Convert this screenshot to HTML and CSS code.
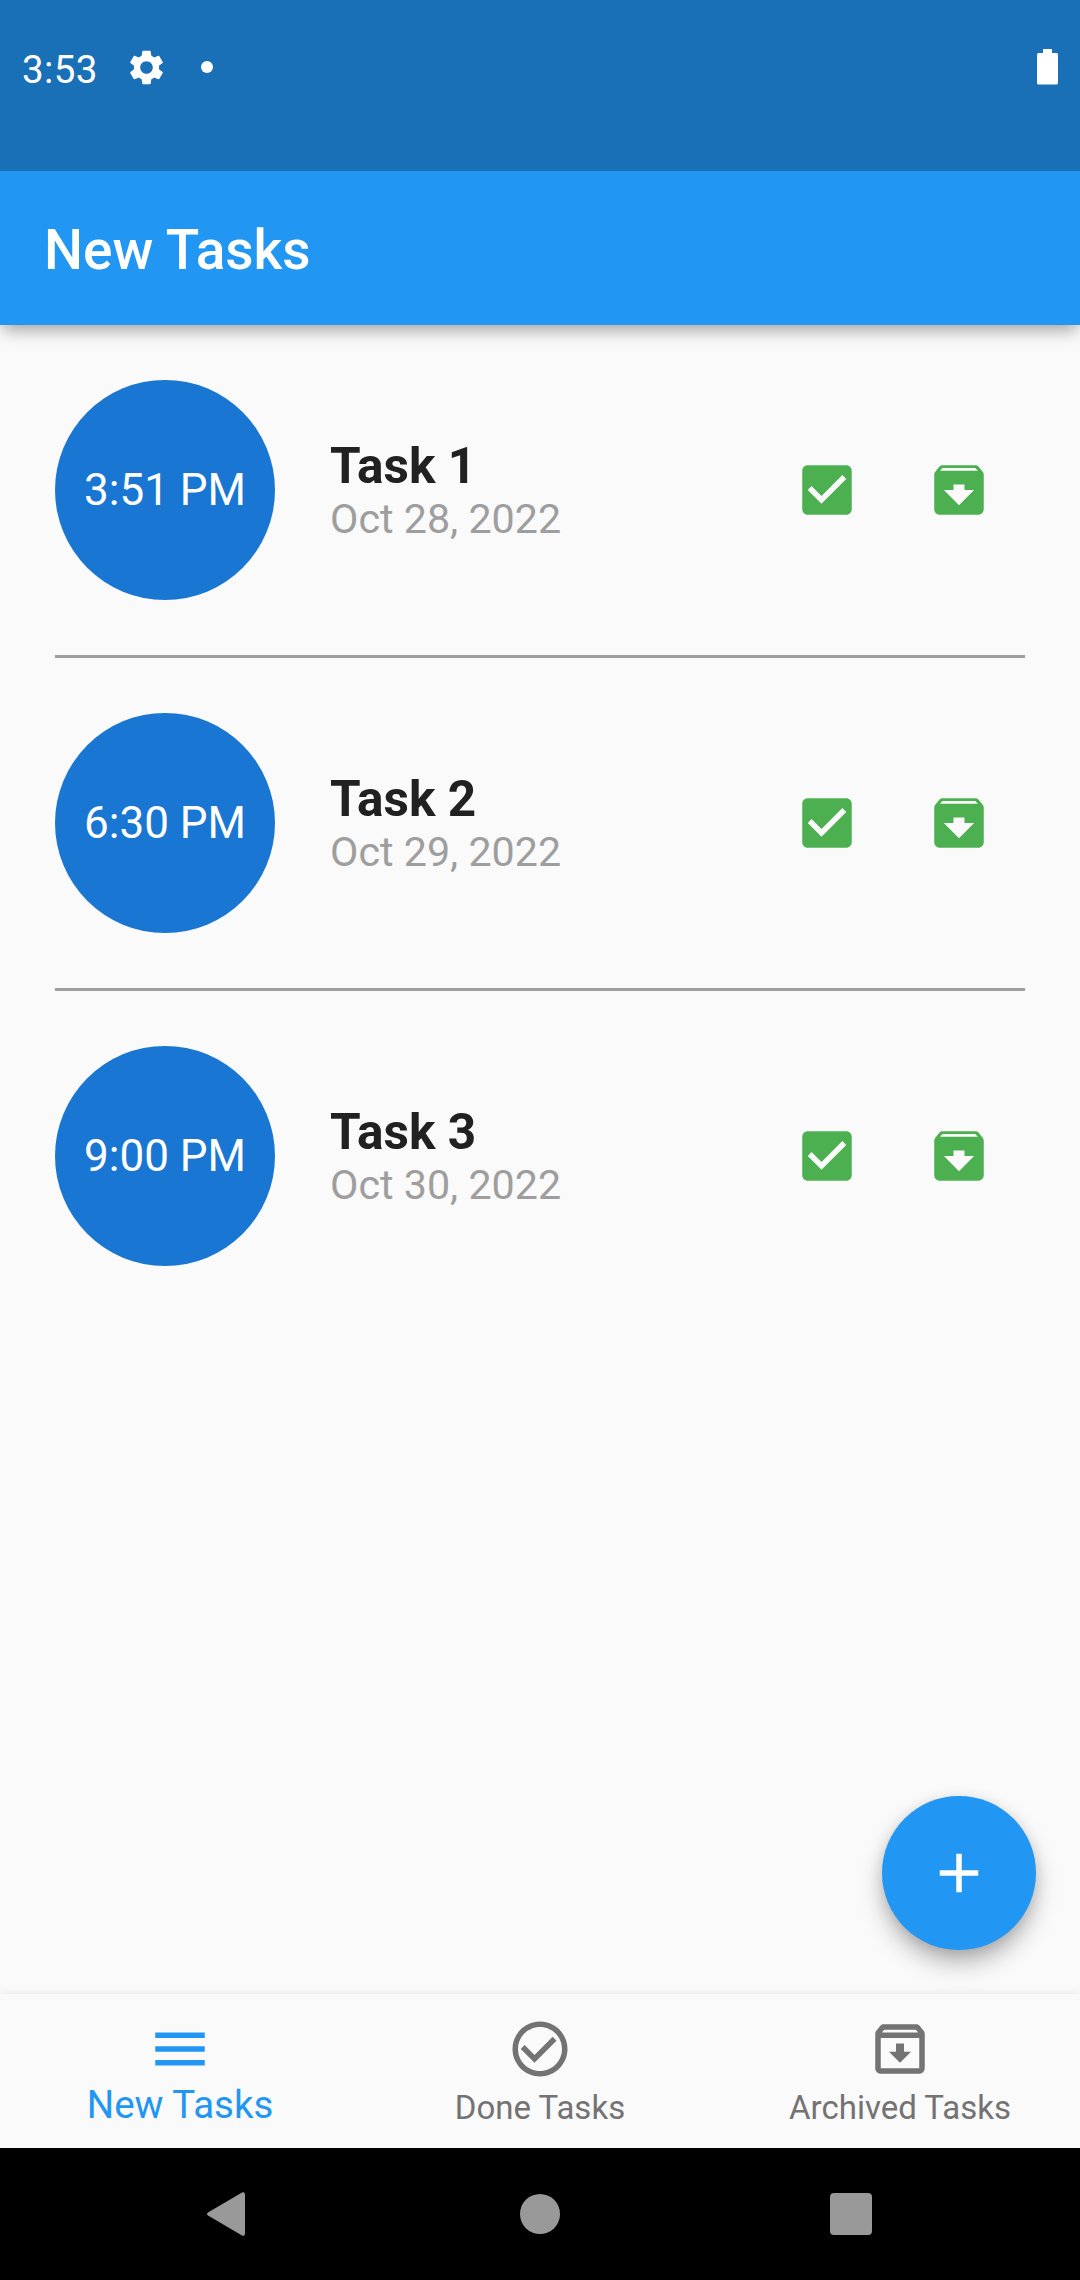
FILE: index.html
```html
<!DOCTYPE html>
<html lang="en">
<head>
<meta charset="utf-8">
<title>New Tasks</title>
<link rel="stylesheet" href="styles.css">
</head>
<body>
<svg class="defs" aria-hidden="true">
  <symbol id="check-box" viewBox="0 0 24 24"><path d="M19 3H5c-1.11 0-2 .9-2 2v14c0 1.1.89 2 2 2h14c1.11 0 2-.9 2-2V5c0-1.1-.89-2-2-2zm-9 14l-5-5 1.41-1.41L10 14.17l7.59-7.59L19 8l-9 9z"/></symbol>
  <symbol id="archive" viewBox="0 0 24 24"><path d="M20.54 5.23l-1.39-1.68C18.88 3.21 18.47 3 18 3H6c-.47 0-.88.21-1.16.55L3.46 5.23C3.17 5.57 3 6.02 3 6.5V19c0 1.1.9 2 2 2h14c1.1 0 2-.9 2-2V6.5c0-.48-.17-.93-.46-1.27zM12 17.5L6.5 12H10v-2h4v2h3.5L12 17.5zM5.12 5l.81-1h12l.94 1H5.12z"/></symbol>
</svg>
<div class="screen">
  <div class="status-bar">
    <span class="clock">3:53</span>
    <svg class="gear" viewBox="2 2 20 20"><path d="M19.14 12.94c.04-.3.06-.61.06-.94 0-.32-.02-.64-.07-.94l2.03-1.58c.18-.14.23-.41.12-.61l-1.92-3.32c-.12-.22-.37-.29-.59-.22l-2.39.96c-.5-.38-1.03-.7-1.62-.94l-.36-2.54c-.04-.24-.24-.41-.48-.41h-3.84c-.24 0-.43.17-.47.41l-.36 2.54c-.59.24-1.13.57-1.62.94l-2.39-.96c-.22-.08-.47 0-.59.22L2.74 8.87c-.12.21-.08.47.12.61l2.03 1.58c-.05.3-.09.63-.09.94s.02.64.07.94l-2.03 1.58c-.18.14-.23.41-.12.61l1.92 3.32c.12.22.37.29.59.22l2.39-.96c.5.38 1.03.7 1.62.94l.36 2.54c.05.24.24.41.48.41h3.84c.24 0 .44-.17.47-.41l.36-2.54c.59-.24 1.13-.56 1.62-.94l2.39.96c.22.08.47 0 .59-.22l1.92-3.32c.12-.22.07-.47-.12-.61l-2.01-1.58zM12 15.6c-1.98 0-3.6-1.62-3.6-3.6s1.62-3.6 3.6-3.6 3.6 1.62 3.6 3.6-1.62 3.6-3.6 3.6z"/></svg>
    <span class="dot"></span>
    <svg class="battery" viewBox="0 0 21 36"><path d="M6 0h9v4h4.500q1.500 0 1.500 1.500v28.500q0 1.500-1.500 1.500h-18q-1.500 0-1.500-1.500v-28.500q0-1.500 1.500-1.500h4.500z"/></svg>
  </div>
  <header class="app-bar"><h1>New Tasks</h1></header>
  <main class="tasks">
    <article class="task">
      <div class="time">3:51 PM</div>
      <div class="info"><h2>Task 1</h2><p>Oct 28, 2022</p></div>
      <button class="action" aria-label="Done"><svg class="icon"><use href="#check-box"/></svg></button>
      <button class="action" aria-label="Archive"><svg class="icon"><use href="#archive"/></svg></button>
    </article>
    <div class="divider"></div>
    <article class="task">
      <div class="time">6:30 PM</div>
      <div class="info"><h2>Task 2</h2><p>Oct 29, 2022</p></div>
      <button class="action" aria-label="Done"><svg class="icon"><use href="#check-box"/></svg></button>
      <button class="action" aria-label="Archive"><svg class="icon"><use href="#archive"/></svg></button>
    </article>
    <div class="divider"></div>
    <article class="task">
      <div class="time">9:00 PM</div>
      <div class="info"><h2>Task 3</h2><p>Oct 30, 2022</p></div>
      <button class="action" aria-label="Done"><svg class="icon"><use href="#check-box"/></svg></button>
      <button class="action" aria-label="Archive"><svg class="icon"><use href="#archive"/></svg></button>
    </article>
    <button class="fab" aria-label="Add task"><svg class="icon" viewBox="0 0 24 24"><path d="M19 13h-6v6h-2v-6H5v-2h6V5h2v6h6v2z"/></svg></button>
  </main>
  <nav class="tabs">
    <a class="tab selected">
      <svg class="icon" viewBox="0 0 24 24"><path d="M3 18h18v-2H3v2zm0-5h18v-2H3v2zm0-7v2h18V6H3z"/></svg>
      <span>New Tasks</span>
    </a>
    <a class="tab">
      <svg class="icon" viewBox="0 0 24 24"><path d="M16.59 7.580L10 14.170l-3.590-3.580L5 12l5 5 8-8zM12 2C6.480 2 2 6.480 2 12s4.480 10 10 10 10-4.480 10-10S17.520 2 12 2zm0 18c-4.420 0-8-3.580-8-8s3.580-8 8-8 8 3.580 8 8-3.580 8-8 8z"/></svg>
      <span>Done Tasks</span>
    </a>
    <a class="tab">
      <svg class="icon" viewBox="0 0 24 24"><path d="M20.54 5.230l-1.390-1.680C18.880 3.210 18.470 3 18 3H6c-.47 0-.88.21-1.160.55L3.460 5.230C3.170 5.570 3 6.020 3 6.500V19c0 1.100.9 2 2 2h14c1.100 0 2-.9 2-2V6.500c0-.48-.17-.93-.46-1.270zM6.240 5h11.520l.83 1H5.420l.82-1zM5 19V8h14v11H5zm8.450-9h-2.900v3H8l4 4 4-4h-2.550z"/></svg>
      <span>Archived Tasks</span>
    </a>
  </nav>
  <div class="system-nav">
    <svg viewBox="0 0 40 46"><path d="M36 1.500L2 21.500q-2 1.500 0 3L36 44.500q3 1 3-2V3.500q0-3-3-2z"/></svg>
    <svg viewBox="0 0 40 40"><circle cx="20" cy="20" r="20"/></svg>
    <svg viewBox="0 0 42 42"><rect width="42" height="42" rx="4"/></svg>
  </div>
</div>
</body>
</html>
```
FILE: styles.css
```css
* { box-sizing: border-box; }
body { margin: 0; font-family: Roboto, sans-serif; background: #fafafa; }
h1, h2, p { margin: 0; }
button { border: 0; padding: 0; background: none; }
svg { display: block; fill: currentColor; }
.defs { display: none; }
.icon { width: 66px; height: 66px; }

.screen { width: 1080px; height: 2280px; display: flex; flex-direction: column; overflow: hidden; }

.status-bar {
  height: 171px; padding: 0 22px; display: flex; align-items: flex-start; z-index: 2;
  background: #1a70b7; color: #fff;
}
.clock { width: 76px; margin-top: 47px; font-size: 38.5px; line-height: 45px; letter-spacing: .4px; }
.gear { width: 35px; height: 35px; margin: 50px 0 0 31px; }
.dot { width: 12px; height: 12px; margin: 61px 0 0 37px; border-radius: 50%; background: #fff; }
.battery { width: 21px; height: 36px; margin: 49px 0 0 auto; }

.app-bar {
  height: 154px; padding: 4px 0 0 44px; display: flex; align-items: center; z-index: 1;
  background: #2196f3; color: #fff;
  box-shadow: 0 8px 16px -3px rgba(0,0,0,.36);
}
.app-bar h1 { font-size: 55px; font-weight: 500; line-height: 64px; }

.tasks { position: relative; flex: 1; padding: 55px; display: flex; flex-direction: column; gap: 55px; }
.task { display: flex; align-items: center; height: 220px; }
.time {
  width: 220px; height: 220px; border-radius: 50%; margin-right: 55px;
  display: flex; align-items: center; justify-content: center;
  background: #1976d2; color: #fff; font-size: 44px;
}
.info { flex: 1; }
.info h2 { font-size: 49.5px; font-weight: 700; line-height: 58px; color: #212121; }
.info p { font-size: 41.25px; line-height: 48px; color: #9e9e9e; }
.action { width: 132px; height: 132px; display: grid; place-items: center; color: #4caf50; }
.divider { height: 2.75px; background: #9e9e9e; }

.fab {
  position: absolute; right: 44px; bottom: 44px; width: 154px; height: 154px; border-radius: 50%;
  display: grid; place-items: center; background: #2196f3; color: #fff;
  box-shadow: 0 14px 26px -3px rgba(0,0,0,.32), 0 2px 14px rgba(0,0,0,.1);
}

.tabs { height: 154px; display: grid; grid-template-columns: repeat(3, 1fr); z-index: 1; background: #fafafa; box-shadow: 0 0 10px rgba(0,0,0,.09); }
.tab { display: flex; flex-direction: column; align-items: center; padding-top: 22px; color: #737373; }
.tab span { font-size: 33px; line-height: 39px; margin-top: 6px; }
.tab.selected { color: #2196f3; }
.tab.selected span { font-size: 38.5px; line-height: 45px; margin-top: 0; }

.system-nav {
  height: 132px; display: grid; grid-template-columns: 206px 314px 310px auto; align-items: center;
  background: #000; color: #999;
}
.system-nav svg { height: 40px; width: 40px; }
.system-nav svg:first-child { height: 46px; grid-column: 2; }
.system-nav svg:last-child { width: 42px; height: 42px; }
.system-nav svg:nth-child(2) { grid-column: 3; }
```
